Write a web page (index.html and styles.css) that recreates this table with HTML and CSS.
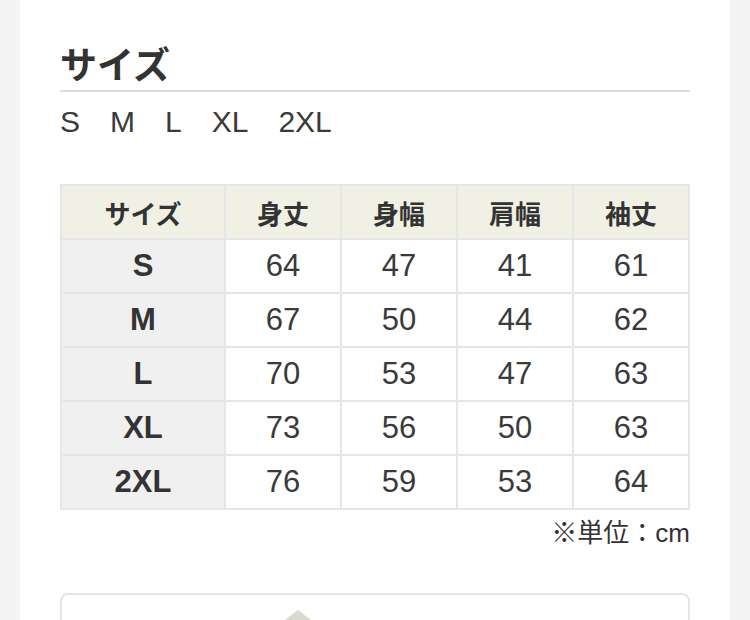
FILE: index.html
```html
<!DOCTYPE html>
<html lang="ja">
<head>
<meta charset="utf-8">
<link rel="stylesheet" href="styles.css">
</head>
<body>
<div class="page">
  <section class="content">
    <h2 class="title">サイズ</h2>
    <div class="sizes">
      <span>S</span><span>M</span><span>L</span><span>XL</span><span>2XL</span>
    </div>
    <table class="chart">
      <thead>
        <tr><th class="first">サイズ</th><th>身丈</th><th>身幅</th><th>肩幅</th><th>袖丈</th></tr>
      </thead>
      <tbody>
        <tr><th>S</th><td>64</td><td>47</td><td>41</td><td>61</td></tr>
        <tr><th>M</th><td>67</td><td>50</td><td>44</td><td>62</td></tr>
        <tr><th>L</th><td>70</td><td>53</td><td>47</td><td>63</td></tr>
        <tr><th>XL</th><td>73</td><td>56</td><td>50</td><td>63</td></tr>
        <tr><th>2XL</th><td>76</td><td>59</td><td>53</td><td>64</td></tr>
      </tbody>
    </table>
    <p class="unit">※単位：cm</p>
    <div class="card">
      <svg class="card-shape" width="80" height="30" viewBox="0 0 80 30">
        <polygon points="14,30 36,13 58,30" fill="#d9d9cd"/>
      </svg>
    </div>
  </section>
</div>
</body>
</html>
```
FILE: styles.css
```css
* { box-sizing: border-box; }
html, body {
  margin: 0;
  padding: 0;
  background: #f4f4f4;
  font-family: "Liberation Sans", "Noto Sans CJK JP", sans-serif;
  color: #333;
}
.page {
  padding: 0 20px;
  height: 620px;
  overflow: hidden;
}
.content {
  background: #fff;
  padding: 38px 40px 40px;
  min-height: 620px;
}
.title {
  margin: 0;
  font-family: "Noto Sans CJK JP", sans-serif;
  font-size: 37px;
  font-weight: 700;
  line-height: 50px;
  padding-bottom: 2px;
  border-bottom: 2px solid #dedede;
  color: #333;
}
.sizes {
  display: flex;
  gap: 30px;
  font-size: 30px;
  line-height: 32px;
  margin-top: 14px;
  color: #3a3a3a;
}
.chart {
  margin-top: 46px;
  width: 100%;
  border-collapse: collapse;
  table-layout: fixed;
}
.chart th, .chart td {
  border: 2px solid #e6e6e6;
  height: 54px;
  padding: 0;
  text-align: center;
  vertical-align: middle;
}
.chart thead th {
  background: #f0f0e4;
  font-family: "Noto Sans CJK JP", sans-serif;
  font-size: 26px;
  font-weight: 700;
  color: #333;
}
.chart thead th.first { width: 164px; }
.chart tbody th {
  background: #f0f0f0;
  font-size: 31px;
  font-weight: 700;
  color: #333;
}
.chart td {
  font-size: 31px;
  color: #3a3a3a;
}
.unit {
  margin: 6px 0 0;
  text-align: right;
  font-size: 26px;
  line-height: 34px;
  color: #333;
}
.card {
  margin-top: 43px;
  border: 2px solid #e6e6e6;
  border-radius: 8px;
  height: 120px;
  padding-left: 200px;
}
.card-shape { display: block; margin-top: 2px; }
```
